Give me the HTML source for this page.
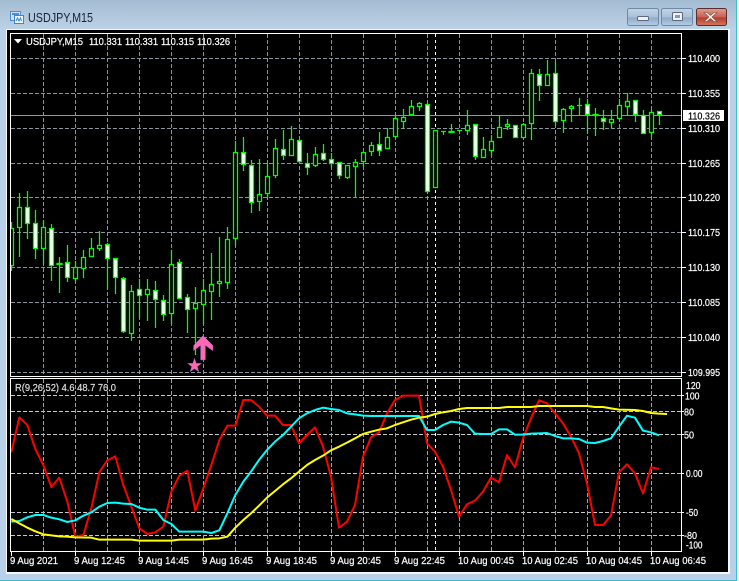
<!DOCTYPE html>
<html><head><meta charset="utf-8"><title>USDJPY,M15</title>
<style>
html,body{margin:0;padding:0;background:#b9d1e8;width:739px;height:581px;overflow:hidden}
svg{display:block;position:absolute;left:0;top:0}
text{font-family:"Liberation Sans",sans-serif;font-size:10px;fill:#fff;stroke:#fff;stroke-width:.2}
</style></head><body>
<svg width="739" height="581" viewBox="0 0 739 581" xmlns="http://www.w3.org/2000/svg">
<defs>
<linearGradient id="t" x1="0" y1="0" x2="0" y2="1"><stop offset="0" stop-color="#a4bcd2"/><stop offset="1" stop-color="#bcd2e6"/></linearGradient>
<linearGradient id="b" x1="0" y1="0" x2="0" y2="1"><stop offset="0" stop-color="#c3d5e6"/><stop offset=".5" stop-color="#a9c0d8"/><stop offset=".55" stop-color="#8fabc8"/><stop offset="1" stop-color="#b4cde4"/></linearGradient>
<linearGradient id="r" x1="0" y1="0" x2="0" y2="1"><stop offset="0" stop-color="#e0a090"/><stop offset=".5" stop-color="#c9604f"/><stop offset=".55" stop-color="#b83c2c"/><stop offset="1" stop-color="#d07a60"/></linearGradient>
<clipPath id="m"><rect x="11" y="34" width="670" height="342"/></clipPath>
<clipPath id="s"><rect x="11" y="379" width="670" height="172"/></clipPath>
</defs>
<rect width="739" height="581" fill="#b9d1e8"/>
<rect width="739" height="30" fill="url(#t)"/>
<rect x="0" y="30" width="7" height="551" fill="#b9d1e8"/>
<rect x="0" y="580" width="739" height="1" fill="#3cc0d0"/>
<rect x="736" y="0" width="1" height="581" fill="#3cc0d0"/>
<rect x="737" y="0" width="2" height="581" fill="#f2f6fa"/>
<rect x="6" y="29" width="724" height="545" fill="#f4f6f8"/>
<rect x="7" y="30" width="721" height="542" fill="#000"/>

<!-- title icon -->
<rect x="10.5" y="11.5" width="10" height="9" fill="#cfe2f5" stroke="#4c8fd0"/>
<rect x="12" y="13" width="7" height="2" fill="#4c8fd0"/>
<rect x="14.5" y="15.500" width="9" height="8" fill="#eef6fd" stroke="#3f86cc"/>
<path d="M16 21l1.500-3 1.500 3 1.500-3 1 3" fill="none" stroke="#3f86cc"/>
<text x="28" y="22" style="font-size:13px;fill:#14233a;stroke:none" textLength="65" lengthAdjust="spacingAndGlyphs">USDJPY,M15</text>

<!-- buttons -->
<rect x="627.500" y="8.500" width="31" height="17" rx="2" fill="url(#b)" stroke="#6f88a4"/>
<rect x="637.500" y="16.500" width="11" height="4" rx="1" fill="#eef2f6" stroke="#5a6a7c"/>
<rect x="661.500" y="8.500" width="31" height="17" rx="2" fill="url(#b)" stroke="#6f88a4"/>
<rect x="672.500" y="12.500" width="10" height="8" rx="1" fill="#eef2f6" stroke="#5a6a7c"/>
<rect x="675" y="15" width="5" height="3" fill="#8a9aac"/>
<rect x="696.500" y="8.500" width="30" height="17" rx="2" fill="url(#r)" stroke="#5c2a30"/>
<path d="M707 12.500l3.500 3 3.500-3h3l-5 4.500 5 4.500h-3l-3.500-3-3.500 3h-3l5-4.500-5-4.500z" fill="#f2f2f0" stroke="#7a4a44" stroke-width=".6"/>

<!-- main chart grid -->
<g clip-path="url(#m)" fill="none" stroke="#8b95a1" stroke-dasharray="4 2">
<path d="M11 58.500H681M11 93.500H681M11 128.500H681M11 163.500H681M11 197.500H681M11 232.500H681M11 267.500H681M11 302.500H681M11 337.500H681M11 372.500H681"/>
<path d="M43.500 34V376M75.500 34V376M107.500 34V376M139.500 34V376M171.500 34V376M203.500 34V376M235.500 34V376M267.500 34V376M299.500 34V376M331.500 34V376M363.500 34V376M395.500 34V376M427.500 34V376M459.500 34V376M491.500 34V376M523.500 34V376M555.500 34V376M587.500 34V376M619.500 34V376M651.500 34V376"/>
</g>
<path d="M435.500 34V376" stroke="#fff" stroke-dasharray="3 3" fill="none"/>
<path d="M11 115.500H681" stroke="#8b95a1" fill="none"/>

<!-- candles -->
<g clip-path="url(#m)" stroke="#00ff00" fill="none" stroke-width="1.250">
<path d="M11.500 222V271M19.500 193V257M27.500 191V239M35.500 210V259M43.500 220V264M51.500 224V281M59.500 257V293M67.500 245V282M75.500 261V282M83.500 250V278M91.500 238V257M99.500 231V251M107.500 243V289M115.500 258V294M123.500 277V333M131.500 285V341M139.500 279V318M147.500 279V321M155.500 281V328M163.500 295V321M171.500 250V324M179.500 259V299M187.500 294V333M195.500 287V355M203.500 279V324M211.500 253V320M219.500 237V297M227.500 227V289M235.500 141V246M243.500 137V171M251.500 160V213M259.500 159V211M267.500 164V198M275.500 139V178M283.500 130V160M291.500 126V156M299.500 140V163M307.500 153V175M315.500 147V167M323.500 144V161M331.500 153V168M339.500 162V179M347.500 165V179M355.500 159V197M363.500 152V167M371.500 142V156M379.500 132V156M387.500 128V149M395.500 116V137M403.500 109V129M411.500 100V115M419.500 102V111M427.500 103V193M443.500 131V135M451.500 124V132M467.500 110V135M475.500 124V160M483.500 137V158M491.500 135V156M499.500 116V138M507.500 119V130M523.500 123V138M531.500 69V140M539.500 69V101M547.500 60V86M555.500 62V126M563.500 108V133M571.500 105V122M579.500 98V115M587.500 99V133M595.500 108V136M603.500 110V130M611.500 110V129M619.500 99V119M627.500 93V115M635.500 100V122M643.500 110V134M651.500 110V137M659.500 115V125"/>
<path d="M57 263.500h5v1h-5zM441 131.500h5M449 131.500h5v1h-5zM457 130.500h5M577 105.500h5M593 114.500h5v1h-5z" fill="#00ff00"/>
<path fill="#000" d="M9.500 228.500h4v37h-4zM17.500 207.500h4v20h-4zM41.500 227.500h4v21h-4zM73.500 267.500h4v11h-4zM81.500 257.500h4v11h-4zM89.500 248.500h4v8h-4zM97.500 245.500h4v3h-4zM129.500 291.500h4v42h-4zM145.500 289.500h4v5h-4zM169.500 264.500h4v49h-4zM193.500 303.500h4v5h-4zM201.500 290.500h4v14h-4zM209.500 284.500h4v7h-4zM217.500 281.500h4v2h-4zM225.500 239.500h4v43h-4zM233.500 152.500h4v86h-4zM257.500 194.500h4v7h-4zM265.500 176.500h4v17h-4zM273.500 148.500h4v27h-4zM289.500 139.500h4v16h-4zM313.500 154.500h4v11h-4zM345.500 165.500h4v12h-4zM353.500 162.500h4v4h-4zM361.500 152.500h4v9h-4zM369.500 145.500h4v6h-4zM385.500 137.500h4v11h-4zM393.500 118.500h4v18h-4zM401.500 117.500h4v4h-4zM409.500 106.500h4v8h-4zM417.500 103.500h4v3h-4zM433.500 130.500h4v57h-4zM465.500 125.500h4v5h-4zM481.500 149.500h4v8h-4zM489.500 141.500h4v9h-4zM497.500 127.500h4v10h-4zM505.500 124.500h4v2h-4zM521.500 124.500h4v13h-4zM529.500 73.500h4v50h-4zM545.500 74.500h4v11h-4zM561.500 109.500h4v11h-4zM569.500 106.500h4v2h-4zM609.500 119.500h4v3h-4zM617.500 105.500h4v13h-4zM625.500 101.500h4v5h-4zM649.500 112.500h4v20h-4z"/>
<path fill="#fff" d="M25.500 207.500h4v16h-4zM33.500 223.500h4v25h-4zM49.500 228.500h4v37h-4zM65.500 262.500h4v15h-4zM105.500 244.500h4v14h-4zM113.500 258.500h4v19h-4zM121.500 278.500h4v53h-4zM137.500 289.500h4v6h-4zM153.500 290.500h4v9h-4zM161.500 300.500h4v14h-4zM177.500 262.500h4v36h-4zM185.500 297.500h4v12h-4zM241.500 152.500h4v12h-4zM249.500 165.500h4v37h-4zM281.500 149.500h4v6h-4zM297.500 140.500h4v21h-4zM305.500 163.500h4v4h-4zM321.500 153.500h4v6h-4zM329.500 159.500h4v4h-4zM337.500 162.500h4v13h-4zM377.500 144.500h4v6h-4zM425.500 104.500h4v87h-4zM473.500 124.500h4v32h-4zM513.500 125.500h4v12h-4zM537.500 74.500h4v11h-4zM553.500 73.500h4v48h-4zM585.500 104.500h4v10h-4zM601.500 118.500h4v3h-4zM633.500 100.500h4v14h-4zM641.500 115.500h4v18h-4zM657.500 111.500h4v3h-4z"/>
</g>

<!-- arrow and star -->
<polygon points="203,335.500 213,345.500 213,351 205.500,345.500 205.500,360 200.500,360 200.500,345.500 193.500,351 193.500,345.500" fill="#ff69b4" stroke="#5a4ab0" stroke-width=".4"/>
<polygon points="194.500,358 196.300,363.200 201.800,363.200 197.400,366.600 199,372 194.500,368.800 190,372 191.600,366.600 187.400,363.200 192.700,363.200" fill="#ff69b4" stroke="#5a4ab0" stroke-width=".4"/>

<!-- sub grid -->
<g clip-path="url(#s)" fill="none" stroke="#c4c8cc" stroke-dasharray="4 2">
<path d="M11 395.500H681M11 411.500H681M11 434.500H681M11 473.500H681M11 512.500H681M11 535.500H681"/>
<path stroke="#9aa2ac" d="M43.500 379V551M75.500 379V551M107.500 379V551M139.500 379V551M171.500 379V551M203.500 379V551M235.500 379V551M267.500 379V551M299.500 379V551M331.500 379V551M363.500 379V551M395.500 379V551M427.500 379V551M459.500 379V551M491.500 379V551M523.500 379V551M555.500 379V551M587.500 379V551M619.500 379V551M651.500 379V551"/>
</g>
<path d="M435.500 379V551" stroke="#fff" stroke-dasharray="3 3" fill="none"/>

<!-- indicator lines -->
<g clip-path="url(#s)" fill="none" stroke-linejoin="round">
<g transform="translate(0 375) scale(.33333)" stroke-width="6">
<polyline stroke="#ff0000" points="34,232 58,127 82,150 106,222 130,270 154,336 178,308 202,380 226,485 250,480 274,400 298,292 322,256 346,244 370,330 394,395 418,460 442,477 466,472 490,455 514,350 538,302 562,287 586,407 610,340 634,270 658,195 682,152 706,152 730,75 753,75 777,95 801,122 825,122 849,150 873,150 897,205 921,180 945,157 969,215 993,305 1017,458 1041,440 1065,390 1089,245 1113,187 1137,172 1161,115 1185,75 1209,62 1233,62 1257,62 1281,205 1305,230 1329,275 1353,345 1377,425 1401,388 1425,377 1449,350 1473,308 1497,322 1521,240 1545,277 1569,190 1593,130 1617,76 1641,85 1665,115 1689,145 1713,185 1737,235 1761,325 1785,450 1809,450 1833,422 1857,292 1881,268 1905,295 1929,355 1953,277 1977,282"/>
<polyline stroke="#00ffff" points="34,440 58,438 82,427 106,420 130,420 154,428 178,433 202,441 226,436 250,422 274,412 298,395 322,384 346,383 370,386 394,387 418,398 442,404 466,404 490,435 514,447 538,470 562,470 586,470 610,470 634,474 658,466 682,415 706,360 730,320 753,290 777,255 801,225 825,200 849,180 873,155 897,130 921,115 945,105 969,98 993,102 1017,105 1041,115 1065,118 1089,122 1113,123 1137,123 1161,123 1185,123 1209,123 1233,123 1257,123 1281,165 1305,165 1329,150 1353,140 1377,143 1401,150 1425,176 1449,177 1473,177 1497,163 1521,163 1545,179 1569,179 1593,176 1617,175 1641,174 1665,183 1689,190 1713,190 1737,192 1761,203 1785,204 1809,198 1833,190 1857,155 1881,122 1905,128 1929,167 1953,172 1977,181"/>
<polyline stroke="#ffff00" points="34,432 58,445 82,458 106,469 130,478 154,481 178,484 202,485 226,487 274,488 298,494 394,494 418,497 514,497 538,494 610,494 634,491 658,490 682,485 706,458 730,435 753,415 777,392 801,368 825,348 849,328 873,310 897,290 921,270 945,255 969,242 993,226 1017,215 1041,203 1065,190 1089,177 1113,170 1137,164 1161,160 1185,150 1209,142 1233,134 1257,128 1281,125 1305,117 1329,112 1353,108 1377,102 1401,99 1497,99 1521,96 1593,96 1617,93 1761,93 1785,96 1809,96 1833,100 1857,104 1905,105 1929,108 1953,114 1977,116 2001,117"/>
</g>
</g>

<!-- frames -->
<g fill="none" stroke="#fff">
<rect x="10.500" y="33.500" width="671" height="343"/>
<rect x="10.500" y="378.500" width="671" height="173"/>
<path d="M682 58.500h4M682 93.500h4M682 128.500h4M682 163.500h4M682 197.500h4M682 232.500h4M682 267.500h4M682 302.500h4M682 337.500h4M682 372.500h4"/>
<path d="M682 395.500h2M682 411.500h2M682 434.500h2M682 473.500h2M682 512.500h2M682 535.500h2"/>
<path d="M11.500 552v4M75.500 552v4M139.500 552v4M203.500 552v4M267.500 552v4M331.500 552v4M395.500 552v4M459.500 552v4M523.500 552v4M587.500 552v4M651.500 552v4"/>
</g>

<!-- header -->
<polygon points="14,39 22,39 18,43.500" fill="#fff"/>
<text x="26" y="45" textLength="57" lengthAdjust="spacingAndGlyphs">USDJPY,M15</text>
<text x="89" y="45" textLength="33" lengthAdjust="spacingAndGlyphs">110.331</text>
<text x="125" y="45" textLength="33" lengthAdjust="spacingAndGlyphs">110.331</text>
<text x="161" y="45" textLength="33" lengthAdjust="spacingAndGlyphs">110.315</text>
<text x="197" y="45" textLength="33" lengthAdjust="spacingAndGlyphs">110.326</text>
<text x="15" y="391" textLength="101" lengthAdjust="spacingAndGlyphs" style="fill:#ddd;stroke:#ddd">R(9,26,52) 4.6 48.7 76.0</text>

<!-- price labels -->
<text x="688" y="62" textLength="32" lengthAdjust="spacingAndGlyphs">110.400</text>
<text x="688" y="97" textLength="32" lengthAdjust="spacingAndGlyphs">110.355</text>
<text x="688" y="132" textLength="32" lengthAdjust="spacingAndGlyphs">110.310</text>
<text x="688" y="167" textLength="32" lengthAdjust="spacingAndGlyphs">110.265</text>
<text x="688" y="201" textLength="32" lengthAdjust="spacingAndGlyphs">110.220</text>
<text x="688" y="236" textLength="32" lengthAdjust="spacingAndGlyphs">110.175</text>
<text x="688" y="271" textLength="32" lengthAdjust="spacingAndGlyphs">110.130</text>
<text x="688" y="306" textLength="32" lengthAdjust="spacingAndGlyphs">110.085</text>
<text x="688" y="341" textLength="32" lengthAdjust="spacingAndGlyphs">110.040</text>
<text x="688" y="376" textLength="32" lengthAdjust="spacingAndGlyphs">109.995</text>
<rect x="683" y="110" width="41" height="11" fill="#fff"/>
<text x="688" y="119.500" textLength="32" lengthAdjust="spacingAndGlyphs" style="fill:#000;stroke:#000">110.326</text>

<!-- sub labels -->
<text x="686" y="389" textLength="14.500" lengthAdjust="spacingAndGlyphs">120</text>
<text x="685" y="399.500" textLength="14.500" lengthAdjust="spacingAndGlyphs">100</text>
<text x="684" y="415.500" textLength="10" lengthAdjust="spacingAndGlyphs">80</text>
<text x="684" y="438.500" textLength="10" lengthAdjust="spacingAndGlyphs">50</text>
<text x="686" y="477" textLength="16.500" lengthAdjust="spacingAndGlyphs">0.00</text>
<text x="686" y="516" textLength="12" lengthAdjust="spacingAndGlyphs">-50</text>
<text x="684" y="539" textLength="13" lengthAdjust="spacingAndGlyphs">-80</text>
<text x="686" y="548.500" textLength="16.500" lengthAdjust="spacingAndGlyphs">-100</text>

<!-- time labels -->
<text x="10" y="564" textLength="48" lengthAdjust="spacingAndGlyphs">9 Aug 2021</text>
<text x="74" y="564" textLength="51" lengthAdjust="spacingAndGlyphs">9 Aug 12:45</text>
<text x="138" y="564" textLength="51" lengthAdjust="spacingAndGlyphs">9 Aug 14:45</text>
<text x="202" y="564" textLength="51" lengthAdjust="spacingAndGlyphs">9 Aug 16:45</text>
<text x="266" y="564" textLength="51" lengthAdjust="spacingAndGlyphs">9 Aug 18:45</text>
<text x="330" y="564" textLength="51" lengthAdjust="spacingAndGlyphs">9 Aug 20:45</text>
<text x="394" y="564" textLength="51" lengthAdjust="spacingAndGlyphs">9 Aug 22:45</text>
<text x="458" y="564" textLength="56" lengthAdjust="spacingAndGlyphs">10 Aug 00:45</text>
<text x="522" y="564" textLength="56" lengthAdjust="spacingAndGlyphs">10 Aug 02:45</text>
<text x="586" y="564" textLength="56" lengthAdjust="spacingAndGlyphs">10 Aug 04:45</text>
<text x="650" y="564" textLength="56" lengthAdjust="spacingAndGlyphs">10 Aug 06:45</text>
</svg>
</body></html>
